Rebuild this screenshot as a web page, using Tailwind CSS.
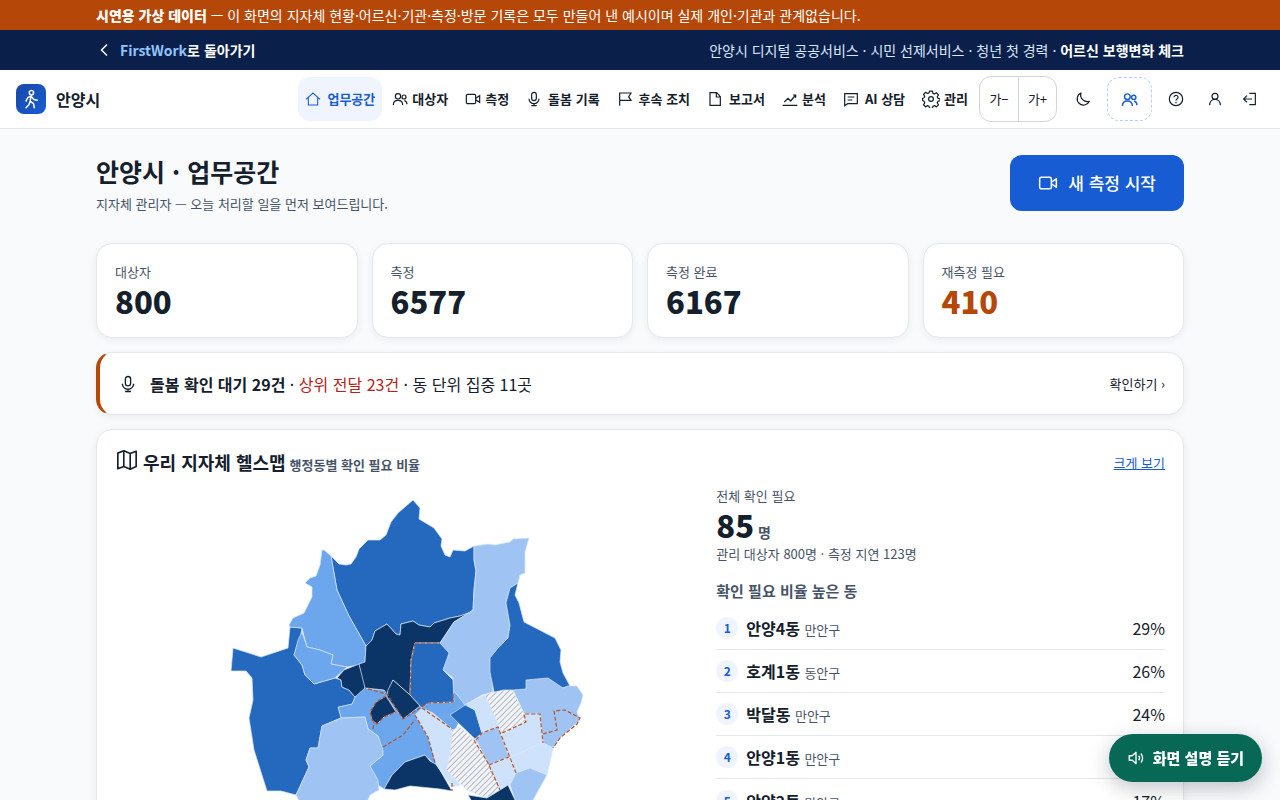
<!DOCTYPE html>
<html lang="ko">
<head>
<meta charset="utf-8">
<meta name="viewport" content="width=device-width, initial-scale=1">
<title>안양시 · 업무공간</title>
<script src="https://cdn.jsdelivr.net/npm/@tailwindcss/browser@4"></script>
</head>
<body class="bg-[#f8fafc] font-['Noto_Sans_CJK_KR',sans-serif] text-base text-[#14202b]">
<svg class="hidden" aria-hidden="true">
  <symbol id="video" viewBox="0 0 24 24"><rect x="2" y="5" width="14" height="14" rx="2"/><path d="M16 11l6-4v10l-6-4"/></symbol>
  <symbol id="users" viewBox="0 0 24 24"><circle cx="9" cy="8" r="4"/><path d="M2 21c0-4.500 3-7 7-7s7 2.500 7 7"/><circle cx="18" cy="9" r="3"/><path d="M18.500 14.500c2.500.5 4 2.500 4 5.500"/></symbol>
  <symbol id="mic" viewBox="0 0 24 24"><rect x="8.500" y="2" width="7" height="12.500" rx="3.500"/><path d="M4.500 11.500a7.500 7.500 0 0 0 15 0M12 19v3M8 22h8"/></symbol>
</svg>

<div class="bg-[#b54708] text-white">
  <p class="mx-auto h-[30px] max-w-[1120px] px-4 text-sm leading-[30px]"><strong class="font-black">시연용 가상 데이터</strong> — 이 화면의 지자체 현황·어르신·기관·측정·방문 기록은 모두 만들어 낸 예시이며 실제 개인·기관과 관계없습니다.</p>
</div>

<div class="bg-[#0b1f4b] text-white">
  <div class="mx-auto flex h-10 max-w-[1120px] items-center justify-between px-4 text-sm">
    <a href="#" class="flex items-center gap-2 font-bold">
      <svg class="size-4 fill-none stroke-current" stroke-width="1.500" viewBox="0 0 16 16"><path d="M11 2.500 5.500 8l5.500 5.500"/></svg>
      <span><span class="text-[#93c5fd]">FirstWork</span>로 돌아가기</span>
    </a>
    <p class="text-[#dbe7fb]">안양시 디지털 공공서비스 · 시민 선제서비스 · 청년 첫 경력 · <strong class="font-bold text-white">어르신 보행변화 체크</strong></p>
  </div>
</div>

<header class="flex h-[59px] items-center justify-between border-b border-[#e4e7ec] bg-white pr-3.5 pl-4">
  <a href="#" class="flex items-center gap-2.5 text-base font-bold">
    <span class="grid size-[30px] place-items-center rounded-lg bg-linear-to-br from-[#1849a9] to-[#175cd3]">
      <svg class="size-5 fill-none stroke-white" stroke-width="1.800" stroke-linecap="round" stroke-linejoin="round" viewBox="0 0 24 24"><circle cx="12.500" cy="4.500" r="2.600"/><path d="M12 8.500l-1 6 4 3 1 5M11 14.500l-1.500 4.500L6 22.500M12 8.500l-4 2-2 4M12.500 9l3 3.500 4 1"/></svg>
    </span>
    안양시
  </a>
  <div class="flex items-center">
    <nav aria-label="주요 메뉴" class="flex items-center gap-[3px] text-[13px] font-bold">
      <a href="#" aria-current="page" class="flex h-11 items-center gap-1.5 rounded-xl bg-[#eff4ff] px-[7px] text-[#175cd3]">
        <svg class="size-4 fill-none stroke-current" stroke-width="1.600" viewBox="0 0 24 24"><path d="M1.500 12.500 12 3l10.500 9.500M5 10v11h14V10"/></svg>업무공간</a>
      <a href="#" class="flex h-11 items-center gap-1 rounded-xl px-[7px]"><svg class="size-4 fill-none stroke-current" stroke-width="1.800"><use href="#users"/></svg>대상자</a>
      <a href="#" class="flex h-11 items-center gap-1 rounded-xl px-[7px]"><svg class="size-4 fill-none stroke-current" stroke-width="1.800"><use href="#video"/></svg>측정</a>
      <a href="#" class="flex h-11 items-center gap-1.5 rounded-xl px-[7px]"><svg class="size-4 fill-none stroke-current" stroke-width="1.800"><use href="#mic"/></svg>돌봄 기록</a>
      <a href="#" class="flex h-11 items-center gap-1.5 rounded-xl px-[7px]"><svg class="size-4 fill-none stroke-current" stroke-width="1.800" viewBox="0 0 24 24"><path d="M4 22V3h17l-3.500 5.500L21 14H4"/></svg>후속 조치</a>
      <a href="#" class="flex h-11 items-center gap-1.5 rounded-xl px-[7px]"><svg class="size-4 fill-none stroke-current" stroke-width="1.800" viewBox="0 0 24 24"><path d="M4.500 2.500h10l5.500 6v13H4.500zM14 2.500V9h6"/></svg>보고서</a>
      <a href="#" class="flex h-11 items-center gap-1 rounded-xl px-[7px]"><svg class="size-4 fill-none stroke-current" stroke-width="1.800" viewBox="0 0 24 24"><path d="M1 21.500h22M3.500 16.500 9 11l4 4 7.500-9M16.500 6h4v4"/></svg>분석</a>
      <a href="#" class="flex h-11 items-center gap-1.5 rounded-xl px-[7px]"><svg class="size-4 fill-none stroke-current" stroke-width="1.800" viewBox="0 0 24 24"><path d="M2.500 4h19v15H7l-4.500 3zM7 9h10M7 13.500h7"/></svg>AI 상담</a>
      <a href="#" class="flex h-11 items-center gap-1 rounded-xl px-[7px]"><svg class="size-[18px] fill-none stroke-current" stroke-width="1.600" stroke-linejoin="round" viewBox="0 0 24 24"><circle cx="12" cy="12" r="3.200"/><path d="M10 1.500h4l.6 3 2 .9 2.600-1.700 2.800 2.800-1.700 2.600.9 2 2.800.6v2.600l-2.800.8-.9 2 1.700 2.600-2.800 2.800-2.600-1.700-2 .9-.6 2.800h-4l-.6-2.800-2-.9-2.600 1.700L2 19.700l1.700-2.600-.9-2L.8 14v-3l2-.6.9-2L2 5.800 4.800 3l2.600 1.700 2-.9z"/></svg>관리</a>
    </nav>
    <div class="ml-1 flex h-[46px] items-center overflow-hidden rounded-xl border border-[#d0d5dd] text-[13px]">
      <button type="button" class="h-full w-[39px] border-r border-[#d0d5dd]">가−</button>
      <button type="button" class="h-full w-[37px]">가+</button>
    </div>
    <button type="button" aria-label="어두운 화면" class="ml-1 grid size-11 place-items-center"><svg class="size-4 fill-none stroke-current" stroke-width="1.800" stroke-linejoin="round" viewBox="0 0 24 24"><path d="M9 3A9.500 9.500 0 1 0 21.500 15.500 10 10 0 0 1 9 3z"/></svg></button>
    <button type="button" aria-label="역할 전환" class="ml-0.5 grid h-11 w-[45px] place-items-center rounded-xl border border-dashed border-[#b2ccff] text-[#175cd3]"><svg class="size-[17px] fill-none stroke-current" stroke-width="2"><use href="#users"/></svg></button>
    <button type="button" aria-label="도움말" class="ml-0.5 grid size-11 place-items-center"><svg class="size-4 fill-none stroke-current" stroke-width="1.800" viewBox="0 0 24 24"><circle cx="12" cy="12" r="10"/><path d="M9 9.500a3 3 0 1 1 4.500 2.500c-1 .6-1.500 1-1.500 2.200M12 16.200v2"/></svg></button>
    <button type="button" aria-label="내 계정" class="grid h-11 w-[34px] place-items-center"><svg class="size-4 fill-none stroke-current" stroke-width="1.800" viewBox="0 0 24 24"><circle cx="12" cy="8" r="4.500"/><path d="M4 21.500c0-5.500 3.500-9 8-9s8 3.500 8 9"/></svg></button>
    <button type="button" aria-label="로그아웃" class="grid h-11 w-[34px] place-items-center"><svg class="size-4 fill-none stroke-current" stroke-width="1.800" viewBox="0 0 24 24"><path d="M12.500 3.500h9v17h-9M16.500 12H4M9 7l-5 5 5 5"/></svg></button>
  </div>
</header>

<main class="mx-auto flex max-w-[1120px] flex-col px-4 pt-[26px] pb-24">
  <div class="flex items-start justify-between">
    <div>
      <h1 class="text-[25px] leading-8 font-bold">안양시 · 업무공간</h1>
      <p class="mt-1.5 text-[13px] leading-[22px] text-[#475467]">지자체 관리자 — 오늘 처리할 일을 먼저 보여드립니다.</p>
    </div>
    <button type="button" class="flex h-14 items-center gap-2.5 rounded-xl bg-[#175cd3] px-7 text-[17px] font-medium text-white"><svg class="size-5 fill-none stroke-current" stroke-width="1.800"><use href="#video"/></svg>새 측정 시작</button>
  </div>

  <dl class="mt-7 grid grid-cols-4 gap-3.5">
    <div class="rounded-2xl border border-[#e4e7ec] bg-white p-[18px] shadow-[0_2px_8px_rgba(16,24,40,0.06)]"><dt class="text-[13px] leading-5 text-[#475467]">대상자</dt><dd class="text-[31px] leading-[37px] font-black">800</dd></div>
    <div class="rounded-2xl border border-[#e4e7ec] bg-white p-[18px] shadow-[0_2px_8px_rgba(16,24,40,0.06)]"><dt class="text-[13px] leading-5 text-[#475467]">측정</dt><dd class="text-[31px] leading-[37px] font-black">6577</dd></div>
    <div class="rounded-2xl border border-[#e4e7ec] bg-white p-[18px] shadow-[0_2px_8px_rgba(16,24,40,0.06)]"><dt class="text-[13px] leading-5 text-[#475467]">측정 완료</dt><dd class="text-[31px] leading-[37px] font-black">6167</dd></div>
    <div class="rounded-2xl border border-[#e4e7ec] bg-white p-[18px] shadow-[0_2px_8px_rgba(16,24,40,0.06)]"><dt class="text-[13px] leading-5 text-[#475467]">재측정 필요</dt><dd class="text-[31px] leading-[37px] font-black text-[#b54708]">410</dd></div>
  </dl>

  <a href="#" class="mt-3.5 flex h-[63px] items-center gap-3 rounded-2xl border border-l-4 border-[#e4e7ec] border-l-[#b54708] bg-white px-[18px] shadow-[0_2px_8px_rgba(16,24,40,0.06)]">
    <svg class="mx-px size-[18px] fill-none stroke-current" stroke-width="1.800"><use href="#mic"/></svg>
    <span class="grow text-base"><strong class="font-bold">돌봄 확인 대기 29건</strong> · <span class="text-[#b42318]">상위 전달 23건</span> · 동 단위 집중 11곳</span>
    <span class="text-[13px]">확인하기 ›</span>
  </a>

  <section class="mt-3.5 rounded-2xl border border-[#e4e7ec] bg-white p-[18px] shadow-[0_2px_8px_rgba(16,24,40,0.06)]">
    <div class="flex h-[30px] items-center justify-between">
      <h2 class="flex items-baseline gap-1 text-lg leading-[30px] font-bold">
        <svg class="mx-px mt-0.5 size-[22px] self-start fill-none stroke-current" stroke-width="1.800" stroke-linejoin="round" viewBox="0 0 24 24"><path d="M2 4.500 8.500 2v17L2 21.500zM8.500 2l7 3v17l-7-3M15.500 5 22 2.500V19l-6.500 3"/></svg>
        우리 지자체 헬스맵 <small class="text-[13px] text-[#475467]">행정동별 확인 필요 비율</small>
      </h2>
      <a href="#" class="text-[13px] text-[#175cd3] underline">크게 보기</a>
    </div>
    <div class="mt-2 grid grid-cols-[1.3fr_1fr] gap-[18px]">
      <svg role="img" aria-label="행정동별 확인 필요 비율 지도" class="mx-auto mt-1 h-auto w-[374px] max-w-full" viewBox="220 490 374 340">
        <defs><pattern id="hatch" width="4" height="4" patternUnits="userSpaceOnUse" patternTransform="rotate(45)"><rect width="4" height="4" fill="#f2f4f7"/><path d="M.5 0v4" stroke="#a9b1be" stroke-width="0.900"/></pattern></defs>
        <g stroke="#d6e6fb" stroke-width="0.700" stroke-linejoin="round">
          <path fill="#6ca6ec" d="M338 707L352 704 355 697 363 688 384 690 430 690 453 678 468 705 455 730 435 765 425 755 405 762 392 775 384 789 378 785 370 766 383 755 378 736 368 729 365 717 341 718z"/>
          <path fill="#2569bf" d="M233 648L258 656 261 657 288 648 290 627 302 628 300 640 294 655 302 665 305 675 314 684 335 678 341 680 342 687 349 690 355 697 352 704 338 707 341 718 322 726 318 748 310 748 306 760 309 767 296 795 281 791 267 791 254 750 249 718 253 700 252 678 246 671 231 671z"/>
          <path fill="#9fc4f4" d="M322 726L341 718 365 717 368 729 378 736 383 750 383 755 370 766 378 780 379 790 370 795 360 820 310 820 296 795 309 767 306 760 310 748 318 748z"/>
          <path fill="#2569bf" d="M331 556L339 564 346 565 351 564 356 557 359 549 368 540 380 540 386 535 391 522 398 513 413 500 420 508 419 519 434 528 442 539 441 546 445 555 450 557 453 550 465 551 474 546 474 560 476 571 474 590 473 610 469 613 460 616 450 618 434 623 430 627 419 625 413 621 401 624 400 635 396 634 387 624 375 631 372 640 366 646 349 616 337 590z"/>
          <path fill="#6ca6ec" d="M322 550L324 550 331 556 337 590 349 616 366 646 365 664 347 667 331 664 333 655 320 650 307 647 304 636 302 628 290 627 289 625 293 618 304 613 312 597 312 587 305 583 310 578 316 576 320 565z"/>
          <path fill="#6ca6ec" d="M302 632L307 647 320 650 333 655 331 664 347 667 335 678 314 684 305 675 302 665 294 655 298 640z"/>
          <path fill="#0b3566" d="M337 678L344 670 359 664 365 680 365 688 355 697 349 690 342 687 341 680z"/>
          <path fill="#0b3566" d="M366 646L372 640 375 631 387 624 396 634 400 635 401 624 413 621 419 625 430 627 434 623 450 618 460 616 471 612 454 622 440 643 415 643 411 660 410 695 393 680 387 694 384 690 365 688 359 664 365 662z"/>
          <path fill="#9fc4f4" d="M474 546L488 544 495 545 510 542 513 539 529 538 525 552 525 573 520 575 518 583 510 588 506 603 510 625 508 638 498 648 490 660 493 692 482 695 465 705 453 690 453 678 443 670 448 653 440 643 454 622 473 610 474 590 476 571 474 560z"/>
          <path fill="#2569bf" d="M518 583L515 595 519 603 524 622 555 638 561 650 560 662 563 673 570 686 563 688 526 690 494 692 490 672 490 658 498 648 508 638 510 625 506 603 510 588z"/>
          <path fill="#9fc4f4" d="M513 690L526 689 526 680 548 678 563 688 568 686 577 686 583 695 581 703 577 712 580 720 560 738 553 748 543 743 540 714 524 714 527 720z"/>
          <path fill="#2569bf" d="M415 643L440 643 449 653 443 670 453 680 454 702 428 703 422 708 410 695 411 660z"/>
          <path fill="#0b3566" d="M393 680L388 690 387 697 403 719 420 706 410 695z"/>
          <path fill="#0b3566" d="M386 696L396 712 384 717 377 724 372 720 370 712 376 702z"/>
          <path fill="#0b3566" d="M384 789L392 775 405 762 425 755 430 761 437 765 452 791 440 789 410 786 395 790z"/>
          <path fill="#cfe2fb" d="M422 708L433 713 452 729 454 745 449 757 448 770 460 785 452 787 437 766 428 737 415 715z"/>
          <path fill="url(#hatch)" d="M452 730L460 727 474 740 488 763 500 790 487 798 467 790 446 770 450 757z"/>
          <path fill="#2569bf" d="M450 715L465 705 475 710 482 733 475 739z"/>
          <path fill="#cfe2fb" d="M466 704L485 695 500 727 482 733 475 710z"/>
          <path fill="url(#hatch)" d="M485 695L503 690 513 690 527 720 502 733z"/>
          <path fill="#9fc4f4" d="M476 740L482 733 498 727 509 757 489 765z"/>
          <path fill="#cfe2fb" d="M489 765L509 757 516 773 510 785 499 789z"/>
          <path fill="#cfe2fb" d="M501 735L526 722 524 714 540 714 543 743 510 757z"/>
          <path fill="#cfe2fb" d="M510 757L543 743 553 748 547 775 530 768 516 773z"/>
          <path fill="#9fc4f4" d="M516 773L530 768 547 775 533 800 525 815 515 800 510 785z"/>
          <path fill="#0b3566" d="M468 795L487 798 500 790 508 785 515 800 518 815 480 815z"/>
        </g>
        <g fill="none" stroke="#b5532a" stroke-width="1.200" stroke-dasharray="4 2">
          <path d="M415 643L440 643M415 643L411 660 410 695M453 694L453 702 428 703 403 719 387 694 365 688M386 696L376 702 370 712 372 720 377 724 384 717 396 712M373 729L374 722M383 747L403 735 415 720M415 715L428 737 435 763M422 708L452 729M474 740L488 763 500 790M476 740L482 733 498 727 516 773M489 765L509 757M502 733L526 722 524 714 540 714 543 743M543 734L557 730 554 711 565 710 580 718 577 724 560 738 553 748M452 783L452 791"/>
        </g>
      </svg>
      <div>
        <p class="text-[13px] leading-5 text-[#475467]">전체 확인 필요</p>
        <p class="flex items-baseline gap-1 text-[31px] leading-[38px] font-black">85<span class="text-sm font-bold text-[#475467]">명</span></p>
        <p class="text-[13px] leading-5 text-[#475467]">관리 대상자 800명 · 측정 지연 123명</p>
        <h3 class="mt-[15px] text-[15px] leading-6 font-bold text-[#475467]">확인 필요 비율 높은 동</h3>
        <ol class="mt-1">
          <li class="flex h-[43px] items-center border-b border-[#e4e7ec]"><span class="mr-2 grid size-[22px] place-items-center rounded-full bg-[#eff4ff] text-xs font-bold text-[#175cd3]">1</span><span class="grow"><strong class="font-bold">안양4동</strong> <small class="text-[13px] text-[#475467]">만안구</small></span><span>29%</span></li>
          <li class="flex h-[43px] items-center border-b border-[#e4e7ec]"><span class="mr-2 grid size-[22px] place-items-center rounded-full bg-[#eff4ff] text-xs font-bold text-[#175cd3]">2</span><span class="grow"><strong class="font-bold">호계1동</strong> <small class="text-[13px] text-[#475467]">동안구</small></span><span>26%</span></li>
          <li class="flex h-[43px] items-center border-b border-[#e4e7ec]"><span class="mr-2 grid size-[22px] place-items-center rounded-full bg-[#eff4ff] text-xs font-bold text-[#175cd3]">3</span><span class="grow"><strong class="font-bold">박달동</strong> <small class="text-[13px] text-[#475467]">만안구</small></span><span>24%</span></li>
          <li class="flex h-[43px] items-center border-b border-[#e4e7ec]"><span class="mr-2 grid size-[22px] place-items-center rounded-full bg-[#eff4ff] text-xs font-bold text-[#175cd3]">4</span><span class="grow"><strong class="font-bold">안양1동</strong> <small class="text-[13px] text-[#475467]">만안구</small></span></li>
          <li class="flex h-[43px] items-center"><span class="mr-2 grid size-[22px] place-items-center rounded-full bg-[#eff4ff] text-xs font-bold text-[#175cd3]">5</span><span class="grow"><strong class="font-bold">안양2동</strong> <small class="text-[13px] text-[#475467]">만안구</small></span><span>17%</span></li>
        </ol>
      </div>
    </div>
  </section>
</main>

<button type="button" class="fixed right-[18px] bottom-[18px] flex h-12 items-center gap-2 rounded-full bg-[#076955] px-[18px] text-[15px] font-black text-white shadow-[0_6px_20px_rgba(16,24,40,0.25)]">
  <svg class="size-[18px] fill-none stroke-current" stroke-width="1.800" stroke-linejoin="round" viewBox="0 0 24 24"><path d="M3 9h4l5-4.500v15L7 15H3zM15.500 9a4.500 4.500 0 0 1 0 6M18.500 6a9 9 0 0 1 0 12"/></svg>화면 설명 듣기
</button>
</body>
</html>
